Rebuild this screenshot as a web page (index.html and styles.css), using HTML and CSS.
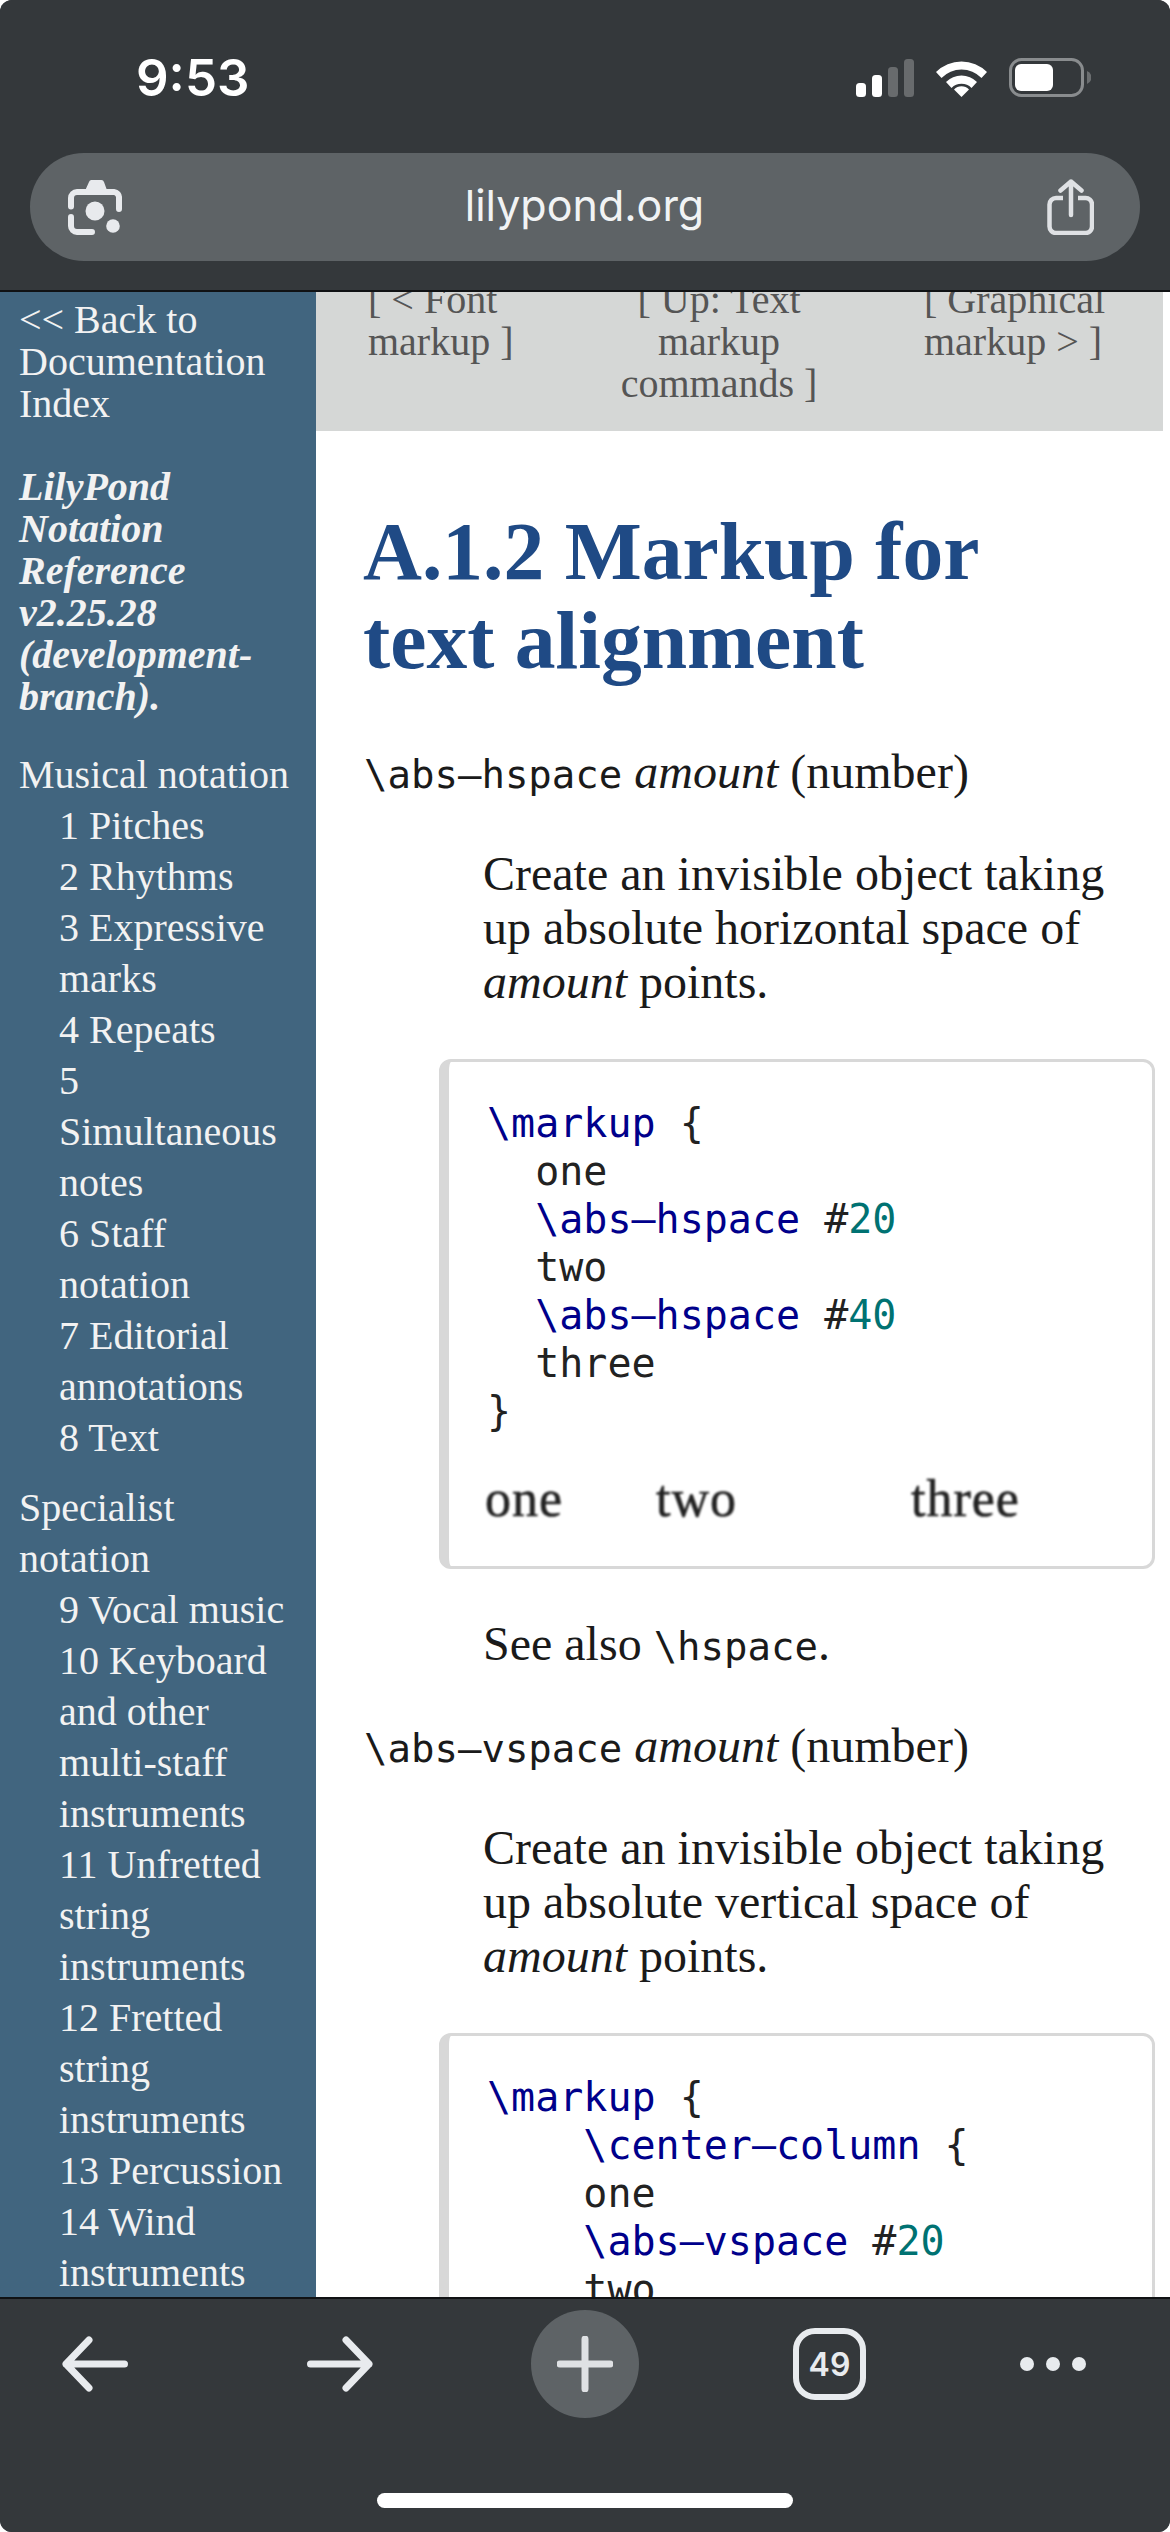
FILE: index.html
```html
<!DOCTYPE html>
<html lang="en">
<head>
    <meta charset="UTF-8">
    <meta name="viewport" content="width=device-width, initial-scale=1.0">
    <title>A.1.2 Markup for text alignment</title>
    <link rel="stylesheet" href="styles.css">
</head>
<body>
    <div class="phone">
        <!-- Barra superior del navegador -->
        <header class="top-bar">
            <div class="status-bar">
                <span class="clock">9:53</span>
                <div class="status-icons">
                    <svg class="signal" width="58" height="38" viewBox="0 0 58 38">
                        <rect x="0" y="24" width="10" height="14" rx="3.5" fill="#fff"/>
                        <rect x="16" y="16" width="10" height="22" rx="3.5" fill="#fff"/>
                        <rect x="32" y="8" width="10" height="30" rx="3.5" fill="#686b6d"/>
                        <rect x="48" y="0" width="10" height="38" rx="3.5" fill="#686b6d"/>
                    </svg>
                    <svg class="wifi" width="51" height="38" viewBox="0 0 51 38">
                        <path d="M0 13 A36 36 0 0 1 51 13 L45.5 19 A28 28 0 0 0 5.500 19 Z" fill="#fff"/>
                        <path d="M10 23 A22 22 0 0 1 41 23 L35.500 29 A14 14 0 0 0 15.500 29 Z" fill="#fff"/>
                        <path d="M25.500 38 L18 30.500 A10.500 10.500 0 0 1 33 30.500 Z" fill="#fff"/>
                    </svg>
                    <svg class="battery" width="82" height="39" viewBox="0 0 82 39">
                        <rect x="1.500" y="1.500" width="72" height="36" rx="11" fill="none" stroke="#898c8e" stroke-width="3"/>
                        <rect x="6" y="6" width="38" height="27" rx="6" fill="#fff"/>
                        <path d="M78 13 A7 7 0 0 1 78 26 Z" fill="#6b6e70"/>
                    </svg>
                </div>
            </div>
            <div class="url-bar">
                <svg class="lens" width="54" height="55" viewBox="0 0 54 55">
                    <path d="M3 26.500 V18 A6 6 0 0 1 9 12 H46 A5.500 5.500 0 0 1 51 18 V29" fill="none" stroke="#e8eaed" stroke-width="6" stroke-linecap="round"/>
                    <path d="M16 13 L21 2 A3 3 0 0 1 23 0 H33 A3 3 0 0 1 36 2 L40 13 Z" fill="#e8eaed"/>
                    <path d="M3 37 V46 A6 6 0 0 0 9 52 H24" fill="none" stroke="#e8eaed" stroke-width="6" stroke-linecap="round"/>
                    <circle cx="27" cy="31" r="9.500" fill="#e8eaed"/>
                    <circle cx="45" cy="46" r="6.800" fill="#e8eaed"/>
                </svg>
                <span class="url-text">lilypond.org</span>
                <svg class="share" width="47" height="56" viewBox="0 0 47 56">
                    <path d="M16 19 H9 A6.500 6.500 0 0 0 2.500 25.500 V47.500 A6.500 6.500 0 0 0 9 54 H38 A6.500 6.500 0 0 0 45 47.500 V25.500 A6.500 6.500 0 0 0 38 19 H31" fill="none" stroke="#dfe1e4" stroke-width="4.500"/>
                    <path d="M24 36 V2.500 M13.500 11.500 L24 2.500 L34.500 11.500" fill="none" stroke="#dfe1e4" stroke-width="4.500" stroke-linecap="round" stroke-linejoin="round"/>
                </svg>
            </div>
        </header>

        <!-- Pagina -->
        <div class="viewport">
            <nav class="sidebar">
                <p class="side-block">&lt;&lt; Back to Documentation Index</p>
                <p class="side-title">LilyPond Notation Reference v2.25.28 (development-branch).</p>
                <p class="side-head">Musical notation</p>
                <ul class="side-list">
                    <li>1 Pitches</li>
                    <li>2 Rhythms</li>
                    <li>3 Expressive marks</li>
                    <li>4 Repeats</li>
                    <li>5 Simultaneous notes</li>
                    <li>6 Staff notation</li>
                    <li>7 Editorial annotations</li>
                    <li>8 Text</li>
                </ul>
                <p class="side-head">Specialist notation</p>
                <ul class="side-list">
                    <li>9 Vocal music</li>
                    <li>10 Keyboard and other multi-staff instruments</li>
                    <li>11 Unfretted string instruments</li>
                    <li>12 Fretted string instruments</li>
                    <li>13 Percussion</li>
                    <li>14 Wind instruments</li>
                </ul>
            </nav>

            <main class="content">
                <div class="page-nav">
                    <div class="nav-left">[ &lt; Font markup ]</div>
                    <div class="nav-mid">[ Up: Text markup commands ]</div>
                    <div class="nav-right">[ Graphical markup &gt; ]</div>
                </div>

                <h1 class="page-title">A.1.2 Markup for text alignment</h1>

                <p class="def"><code>\abs–hspace</code> <em>amount</em> (number)</p>
                <div class="def-body">
                    <p>Create an invisible object taking up absolute horizontal space of <em>amount</em> points.</p>
                    <div class="example">
<pre class="code"><span class="kw">\markup</span> {
  one
  <span class="kw">\abs–hspace</span> #<span class="num">20</span>
  two
  <span class="kw">\abs–hspace</span> #<span class="num">40</span>
  three
}</pre>
                        <div class="rendered">
                            <span class="word-one">one</span>
                            <span class="word-two">two</span>
                            <span>three</span>
                        </div>
                    </div>
                    <p class="see-also">See also <code>\hspace</code>.</p>
                </div>

                <p class="def"><code>\abs–vspace</code> <em>amount</em> (number)</p>
                <div class="def-body">
                    <p>Create an invisible object taking up absolute vertical space of <em>amount</em> points.</p>
                    <div class="example">
<pre class="code"><span class="kw">\markup</span> {
    <span class="kw">\center–column</span> {
    one
    <span class="kw">\abs–vspace</span> #<span class="num">20</span>
    two
    <span class="kw">\abs–vspace</span> #<span class="num">20</span>
    three
    }
}</pre>
                    </div>
                </div>
            </main>
        </div>

        <!-- Barra inferior -->
        <footer class="bottom-bar">
            <div class="tools">
                <svg class="tool-back" width="66" height="56" viewBox="0 0 66 56">
                    <path d="M62.500 28 H4 M27 4 L4 28 L27 52" fill="none" stroke="#e8ebee" stroke-width="7" stroke-linecap="round" stroke-linejoin="round"/>
                </svg>
                <svg class="tool-forward" width="66" height="56" viewBox="0 0 66 56">
                    <path d="M3.500 28 H62 M39 4 L62 28 L39 52" fill="none" stroke="#e8ebee" stroke-width="7" stroke-linecap="round" stroke-linejoin="round"/>
                </svg>
                <div class="add-btn">
                    <svg width="56" height="56" viewBox="0 0 56 56">
                        <path d="M28 3 V53 M3 28 H53" fill="none" stroke="#dfe1e4" stroke-width="7" stroke-linecap="round"/>
                    </svg>
                </div>
                <div class="tab-count">49</div>
                <div class="more-dots"><i></i><i></i><i></i></div>
            </div>
            <div class="home-bar"></div>
        </footer>
    </div>
</body>
</html>
```

FILE: styles.css
```css
* {
    box-sizing: border-box;
}

html, body {
    margin: 0;
    padding: 0;
    background: #fff;
}

.phone {
    width: 1170px;
    height: 2532px;
    display: flex;
    flex-direction: column;
    overflow: hidden;
    border-radius: 12px;
    background: #34383b;
}

/* Barra superior */
.top-bar {
    height: 292px;
    flex: none;
    background: #34383b;
    border-bottom: 2px solid #101214;
    padding: 0 30px;
}

.status-bar {
    height: 153px;
    display: flex;
    align-items: center;
    justify-content: space-between;
    padding: 2px 49px 0 106px;
    color: #fff;
}

.clock {
    font-family: 'Inter', sans-serif;
    font-size: 51px;
    font-weight: 600;
}

.status-icons {
    display: flex;
    align-items: center;
    gap: 22px;
}

.url-bar {
    height: 108px;
    border-radius: 54px;
    background: #5e6366;
    display: flex;
    align-items: center;
    justify-content: space-between;
    padding: 0 46px 0 38px;
}

.url-text {
    font-family: 'Inter', sans-serif;
    font-size: 43px;
    color: #f1f3f4;
    margin-bottom: 5px;
}

/* Pagina */
.viewport {
    flex: 1;
    min-height: 0;
    display: flex;
    overflow: hidden;
    background: #fff;
    font-family: 'Liberation Serif', serif;
}

.sidebar {
    width: 316px;
    flex: none;
    background: #41657f;
    color: #f2f2f2;
    font-size: 40px;
    line-height: 42px;
    padding: 7px 20px 0 19px;
}

.sidebar p {
    margin: 0;
}

.side-block {
    padding-bottom: 41px;
}

.side-title {
    font-style: italic;
    font-weight: bold;
    padding-bottom: 31px;
}

.side-head {
    line-height: 51px;
}

.side-list {
    list-style: none;
    margin: 0 0 19px;
    padding: 0 0 0 40px;
    line-height: 51px;
}

.content {
    flex: 1;
    min-width: 0;
    color: #1a1a1a;
    font-size: 48px;
}

.page-nav {
    width: 847px;
    height: 152px;
    background: #d5d7d6;
    color: #555;
    font-size: 40px;
    line-height: 42px;
    display: grid;
    grid-template-columns: 282px 282px 283px;
    margin-top: -13px;
}

.nav-left {
    padding: 0 60px 0 52px;
}

.nav-mid {
    text-align: center;
    padding: 0 40px 0 0;
}

.nav-right {
    padding: 0 50px 0 44px;
}

.page-title {
    margin: 76px 60px 59px 47px;
    color: #1f4a85;
    font-size: 81.6px;
    line-height: 89px;
    font-weight: bold;
}

.def {
    margin: 0 0 45px 48px;
    line-height: 55px;
}

code, .code {
    font-family: 'DejaVu Sans Mono', monospace;
}

.def code,
.see-also code {
    font-size: 39px;
}

.def-body {
    margin-left: 167px;
    margin-right: 17px;
}

.def-body p {
    margin: 0;
    line-height: 54px;
}

.example {
    margin: 50px 0 0 -44px;
    width: 716px;
    border: 3px solid #d8d8d8;
    border-left-width: 10px;
    border-radius: 12px;
    padding: 37px 36px 42px 38px;
}

.code {
    margin: 0;
    font-size: 40px;
    line-height: 48px;
    color: #222;
}

.kw {
    color: #00008b;
}

.num {
    color: #007272;
}

.rendered {
    margin: 39px 0 0 -2px;
    display: flex;
    font-size: 52px;
    line-height: 50px;
    letter-spacing: 1px;
    color: #222;
    -webkit-text-stroke: 0.6px #222;
    filter: blur(0.9px);
}

.word-one {
    width: 171px;
}

.word-two {
    width: 255px;
}

.def-body .see-also {
    margin: 48px 0 44px;
}

/* Barra inferior */
.bottom-bar {
    flex: none;
    height: 235px;
    background: #34383b;
    border-top: 2px solid #101214;
}

.tools {
    height: 130px;
    display: flex;
    align-items: center;
    gap: 154px;
    padding-left: 62px;
}

.tool-forward {
    margin-left: 25px;
}

.add-btn {
    width: 108px;
    height: 108px;
    margin-left: 4px;
    border-radius: 50%;
    background: #5e6366;
    display: flex;
    align-items: center;
    justify-content: center;
}

.tab-count {
    width: 73px;
    height: 72px;
    border: 6px solid #e8ebee;
    border-radius: 22px;
    color: #e8ebee;
    font-family: 'Inter', sans-serif;
    font-size: 32px;
    font-weight: 600;
    display: flex;
    align-items: center;
    justify-content: center;
}

.more-dots {
    display: flex;
    gap: 12px;
}

.more-dots i {
    width: 14px;
    height: 14px;
    border-radius: 50%;
    background: #e8ebee;
}

.home-bar {
    width: 416px;
    height: 15px;
    margin: 64px auto 0;
    border-radius: 8px;
    background: #fff;
}
```
